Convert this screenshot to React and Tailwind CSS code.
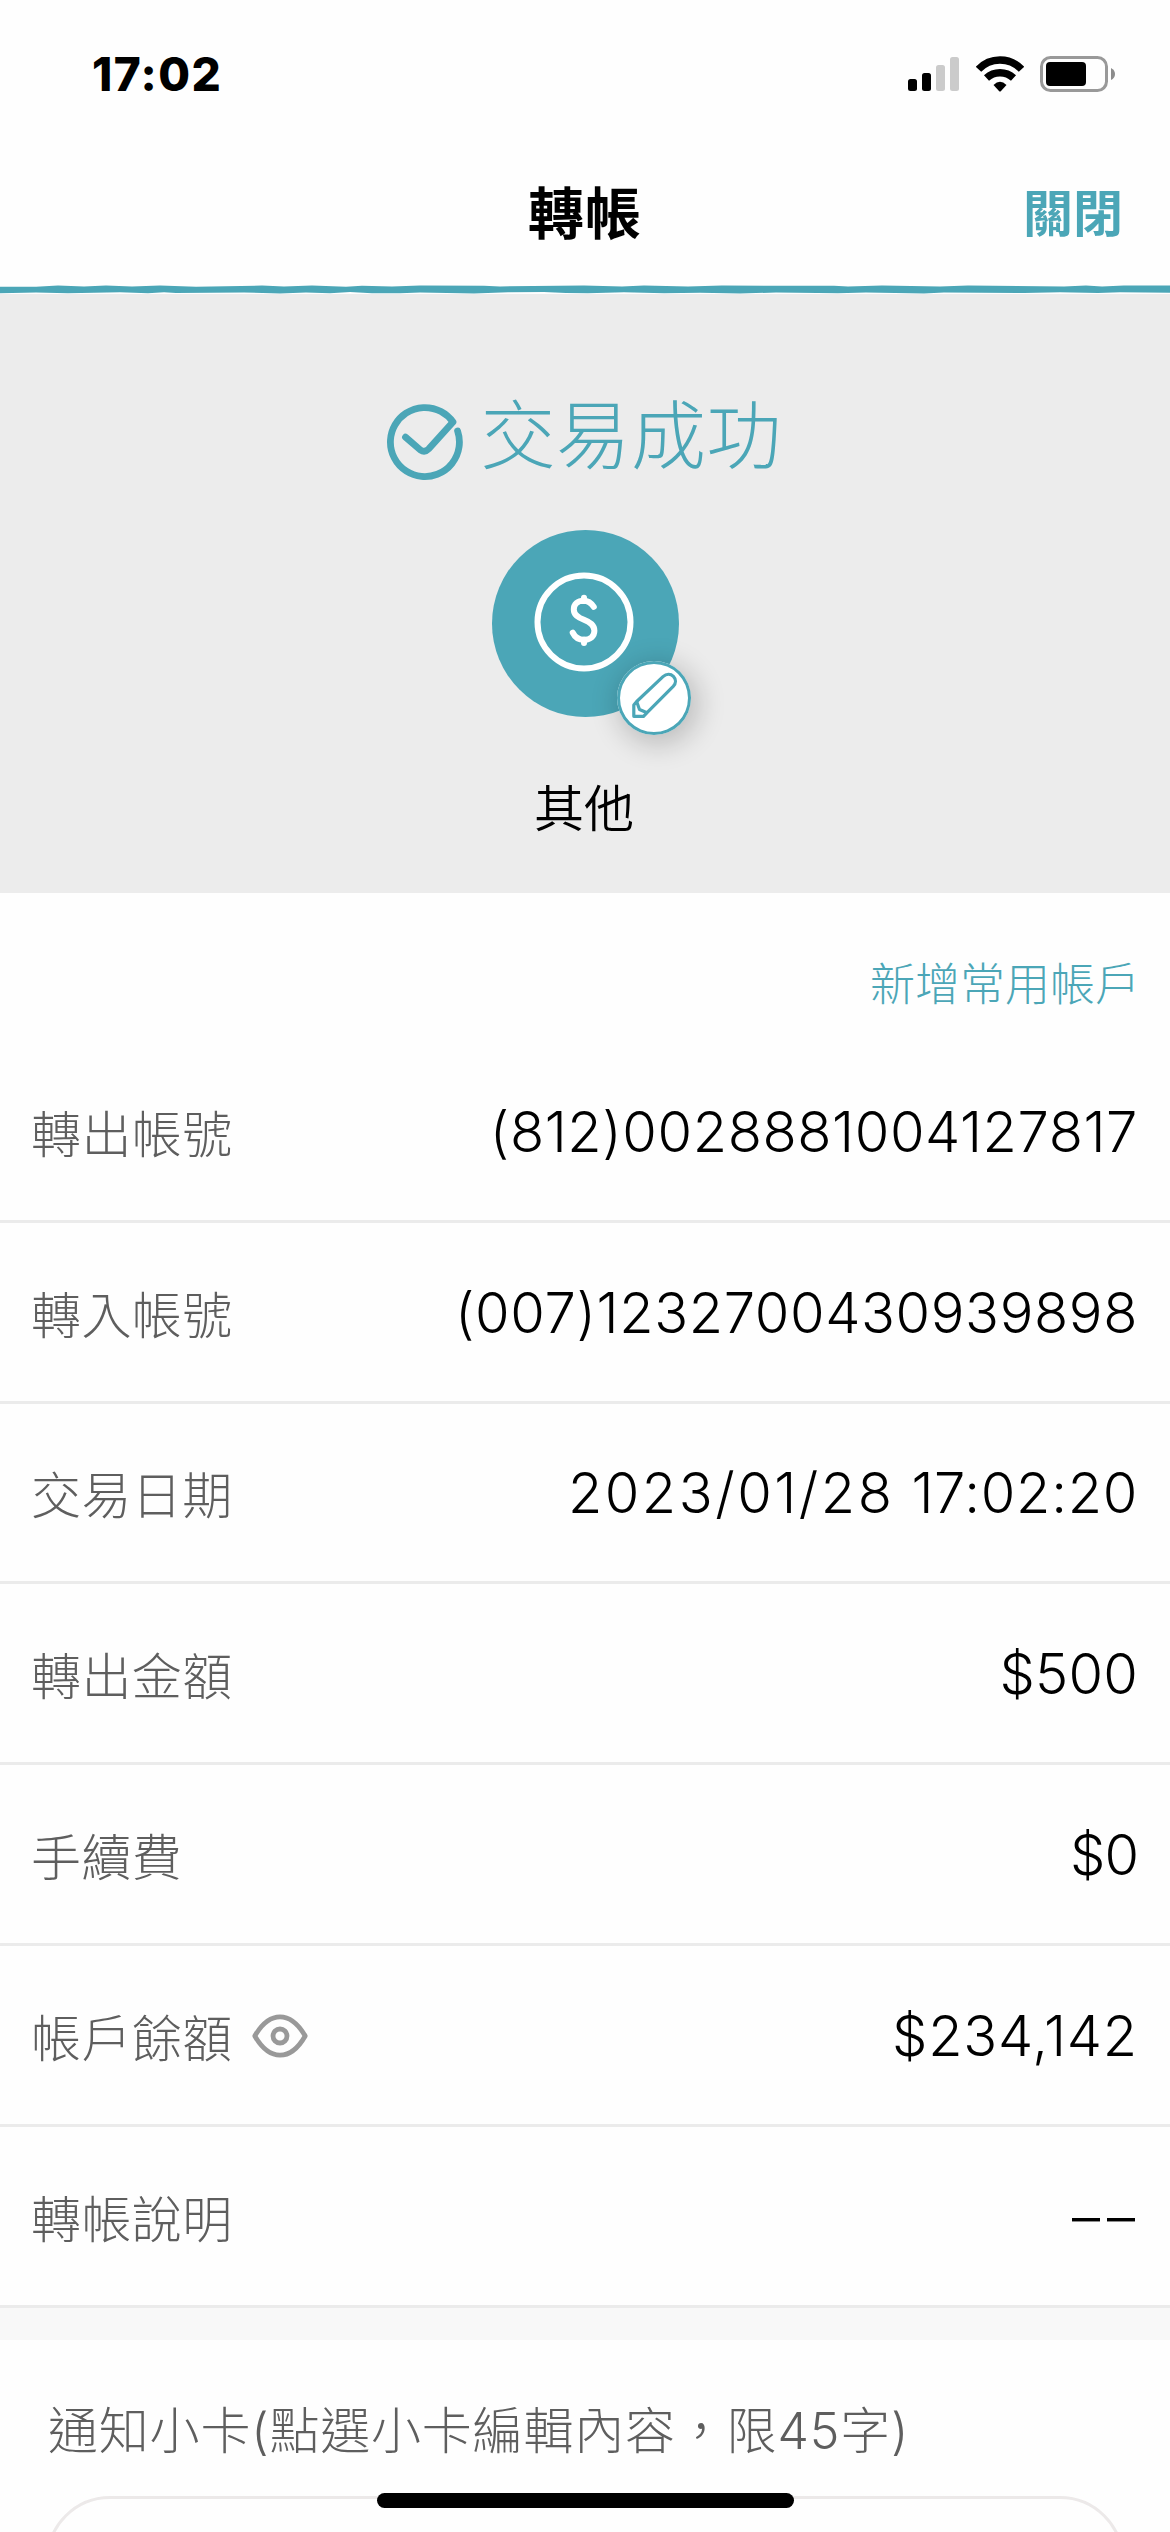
import React from "react";

const cjk = "font-['Noto_Sans_CJK_TC',sans-serif]";
const latin = "font-['Inter','Noto_Sans_CJK_TC',sans-serif]";

const rows = [
  { label: "轉出帳號", value: "(812)0028881004127817", tracking: "tracking-[0.58px]" },
  { label: "轉入帳號", value: "(007)1232700430939898", tracking: "tracking-[0.62px]" },
  { label: "交易日期", value: "2023/01/28", time: "17:02:20", tracking: "tracking-[2.5px]" },
  { label: "轉出金額", value: "$500", tracking: "tracking-[0.2px]" },
  { label: "手續費", value: "$0", tracking: "tracking-[-1px]" },
  { label: "帳戶餘額", value: "$234,142", tracking: "tracking-[0.8px]", eye: true },
  { label: "轉帳說明", value: "––", tracking: "tracking-[7px] -mr-1 pt-1" },
];

function SignalIcon() {
  return (
    <svg width="52" height="36" viewBox="0 0 52 36">
      <rect x="0" y="23" width="9" height="12" rx="2.5" fill="#000" />
      <rect x="14" y="17" width="9" height="18" rx="2.5" fill="#000" />
      <rect x="28" y="9" width="9" height="26" rx="2.5" fill="#cbcbcb" />
      <rect x="42" y="1" width="9" height="34" rx="2.5" fill="#cbcbcb" />
    </svg>
  );
}

function WifiIcon() {
  return (
    <svg width="48" height="36" viewBox="0 0 48 36" fill="none" stroke="#000" strokeWidth="7.4">
      <path d="M2.5 13.3A29.5 29.5 0 0 1 45.5 13.3" />
      <path d="M10.5 22A19.8 19.8 0 0 1 37.5 22" />
      <path d="M17.5 29Q24 22.6 30.5 29L25 35Q24 36 23 35Z" fill="#000" stroke="none" />
    </svg>
  );
}

function BatteryIcon() {
  return (
    <svg width="76" height="36" viewBox="0 0 76 36">
      <rect x="1.5" y="1.5" width="65" height="33" rx="9" fill="none" stroke="#999" strokeWidth="3" />
      <rect x="6" y="6" width="40" height="24" rx="4" fill="#000" />
      <path d="M71 12Q75 14 75 18T71 24Z" fill="#8c8c8c" />
    </svg>
  );
}

function CheckIcon() {
  return (
    <svg className="mt-3 shrink-0" width="76" height="76" viewBox="0 0 76 76" fill="none" stroke="#4ba6b7" strokeWidth="6.8" strokeLinecap="round" strokeLinejoin="round">
      <path d="M70.6 27A34.5 34.5 0 1 1 66 18L41.6 45Q37.7 49 33.4 46L18.5 33.2" />
    </svg>
  );
}

function CoinIcon() {
  return (
    <svg className="mr-[3px] mb-[3px]" width="100" height="100" viewBox="0 0 100 100" fill="none" stroke="#fff" strokeWidth="6" strokeLinecap="round">
      <circle cx="50" cy="50" r="46.5" />
      <path d="M59.8 34.8C57 30.5 53.5 28.7 49.6 28.7C43.8 28.7 39.8 32.2 39.8 37.4C39.8 43 44 45.4 50 47.8C56 50.2 60.4 52.8 60.4 58.8C60.4 64.4 56 67.8 50 67.8C44.8 67.8 41 65.4 38.7 60.6M50 25.8V29M50 67.5V71" />
    </svg>
  );
}

function PencilIcon() {
  return (
    <svg width="74" height="74" viewBox="0 0 74 74" fill="none" stroke="#4ba6b7" strokeWidth="3.2" strokeLinejoin="round" strokeLinecap="round">
      <path d="M19.7 40.5L46 15.6C49.4 12.6 53.6 12.6 56.4 15.3C59.2 18.2 59.2 22.2 56.2 25.4L30.3 51.3L26.5 55.3H16.8V44Z" />
      <path d="M20 41.5L22.5 48.5L29.5 51.5" />
    </svg>
  );
}

function EyeIcon() {
  return (
    <svg className="mt-[2px] ml-[19px]" width="56" height="44" viewBox="0 0 56 44" fill="none" stroke="#999" strokeWidth="4.8" strokeLinejoin="round">
      <path d="M2.8 22C10 9.5 18.5 2.8 28 2.8S46 9.5 53.2 22C46 34.5 37.5 41.2 28 41.2S10 34.5 2.8 22Z" />
      <circle cx="28" cy="22" r="7" />
    </svg>
  );
}

function BrushLine() {
  return (
    <svg className="block h-[10px] w-full shrink-0" viewBox="0 0 1170 10" preserveAspectRatio="none">
      <path
        fill="#4ba6b7"
        d="M0 2.8H36L58 1.6L84 2.4L106 1.6L132 2.4L160 1.4L196 2.8L262 1.6L284 2.6L312 1.6L346 2.8L362 1.8L392 2.6L420 1.6L484 1.8L500 2.4L584 1.6L622 2.6L644 1.6L688 2.6L722 1.6L834 1.8L848 2.6L882 1.6L940 2.4L968 1.6L1064 2.6L1086 1.6L1102 2.4L1124 1.6H1170V8.8L1120 8.2L1098 9L1060 8.2L1024 9L944 8.6L924 9.4L866 8.4L838 9.2L776 8.6L740 9.4L700 8.8L664 9.2L624 8.2L588 9.2L566 9L544 8L508 8.2L474 9.4L420 8.6L400 9.2L372 9.2L350 8L330 9.2L306 8.6L280 9.4L244 8.4L176 9L164 8.2L148 9.2L120 8.2L68 9.2L36 8.6L0 9.2Z"
      />
    </svg>
  );
}

export default function App() {
  return (
    <div className={`${cjk} relative flex h-[2532px] w-[1170px] flex-col overflow-hidden bg-[#fefefe] font-light text-black`}>
      <div className="flex h-[148px] shrink-0 items-center justify-between pl-[92px] pr-[54px]">
        <span className={`${latin} text-[46px] leading-none font-extrabold tracking-[1.4px]`}>17:02</span>
        <div className="flex items-center gap-4">
          <SignalIcon />
          <WifiIcon />
          <BatteryIcon />
        </div>
      </div>

      <header className="grid h-[136px] shrink-0 grid-cols-[1fr_auto_1fr] items-center pb-3">
        <span />
        <h1 className="text-[56px] leading-none font-bold tracking-[1px]">轉帳</h1>
        <button className="justify-self-end pr-[47px] text-[50px] leading-none font-bold text-[#4ba6b7]">關閉</button>
      </header>
      <BrushLine />

      <section className="flex h-[599px] shrink-0 flex-col items-center bg-[#ececec] pt-[98px]">
        <div className="flex h-[88px] items-start gap-[17px] pr-[1px] text-[#4ba6b7]">
          <CheckIcon />
          <p className="pt-px text-[75px] leading-none tracking-[0.3px]">交易成功</p>
        </div>
        <div className="relative mt-[50px] flex size-[187px] items-center justify-center rounded-full bg-[#4ba6b7]">
          <CoinIcon />
          <div className="absolute top-[131px] left-[125px] flex size-[74px] items-center justify-center rounded-full bg-white shadow-[4px_6px_28px_4px_rgba(0,0,0,0.2)] ring-[3px] ring-[#4ba6b7] ring-inset">
            <PencilIcon />
          </div>
        </div>
        <p className="mt-[58px] pr-[2px] text-[50px] leading-[60px] font-[350]">其他</p>
      </section>

      <div className="flex h-[149px] shrink-0 items-center justify-end pt-[27px] pr-[30px]">
        <a className="text-[45px] leading-none text-[#4ba6b7]">新增常用帳戶</a>
      </div>

      <ul className="shrink-0">
        {rows.map((row) => (
          <li key={row.label} className="flex h-[180.8px] items-center justify-between border-b-[3px] border-[#ebebeb] pr-8 pl-[31px]">
            <span className="flex items-center text-[50px] leading-none tracking-[0.4px] text-[#5e5e5e]">
              {row.label}
              {row.eye && <EyeIcon />}
            </span>
            <span className={`${latin} flex gap-[17px] pt-[2px] text-[56px] leading-none font-[260] ${row.tracking}`}>
              {row.value}
              {row.time && <span className="tracking-[0.7px]">{row.time}</span>}
            </span>
          </li>
        ))}
      </ul>

      <div className="h-8 shrink-0 bg-[#f8f8f8]" />

      <div className="flex h-[156px] shrink-0 items-center pt-[26px] pl-12">
        <p className={`${latin} text-[50px] leading-none tracking-[0.8px] text-[#5e5e5e]`}>
          通知小卡<span className="font-[260]">(</span>點選小卡編輯內容，限<span className="font-[260]">45</span>字<span className="font-[260]">)</span>
        </p>
      </div>
      <div className="mx-[46px] h-[200px] shrink-0 rounded-t-[64px] border-[3px] border-[#ece9e9]" />

      <div className="absolute top-[2493px] left-[377px] h-[15px] w-[417px] rounded-full bg-black" />
    </div>
  );
}
